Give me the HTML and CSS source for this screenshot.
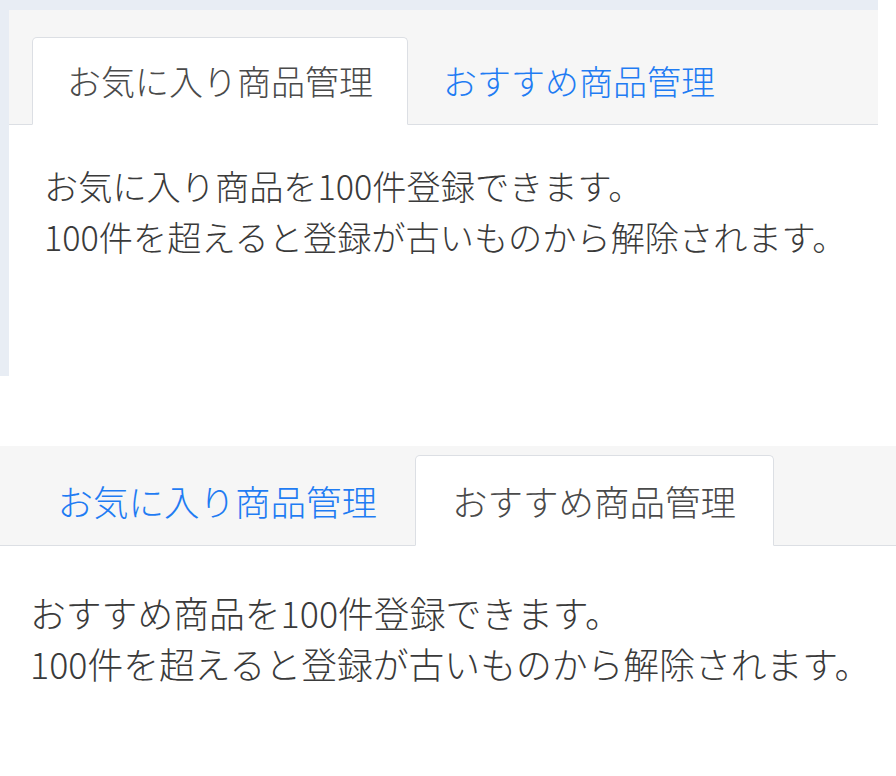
FILE: index.html
```html
<!DOCTYPE html>
<html lang="ja">
<head>
    <meta charset="UTF-8">
    <meta name="viewport" content="width=device-width, initial-scale=1.0">
    <title>商品管理タブ</title>
    <link rel="stylesheet" href="styles.css">
</head>
<body>
    <!-- お気に入りタブ選択時 -->
    <div class="shot shot-favorite">
        <div class="panel">
            <ul class="tabs">
                <li class="tab active">お気に入り商品管理</li>
                <li class="tab">おすすめ商品管理</li>
            </ul>
            <div class="tab-body">
                <p>お気に入り商品を100件登録できます。<br>100件を超えると登録が古いものから解除されます。</p>
            </div>
        </div>
    </div>

    <!-- おすすめタブ選択時 -->
    <div class="shot shot-recommend">
        <div class="panel">
            <ul class="tabs">
                <li class="tab">お気に入り商品管理</li>
                <li class="tab active">おすすめ商品管理</li>
            </ul>
            <div class="tab-body">
                <p>おすすめ商品を100件登録できます。<br>100件を超えると登録が古いものから解除されます。</p>
            </div>
        </div>
    </div>
</body>
</html>
```

FILE: styles.css
```css
body {
    margin: 0;
    background: #fff;
    font-family: "Noto Sans CJK JP", sans-serif;
    font-weight: 300;
    color: #3a3a3a;
}
.shot {
    box-sizing: border-box;
    overflow: hidden;
}
.panel {
    height: 100%;
    background: #fff;
}
.tabs {
    display: flex;
    align-items: flex-end;
    list-style: none;
    margin: 0;
    background: #f6f6f6;
    border-bottom: 1px solid #dcdfe4;
}
.tab {
    box-sizing: border-box;
    padding: 0 34px;
    margin-bottom: -1px;
    border: 1px solid transparent;
    border-radius: 5px 5px 0 0;
    color: #1f7cf3;
    white-space: nowrap;
}
.tab.active {
    background: #fff;
    color: #4a4a4a;
    border-color: #dcdfe4;
    border-bottom-color: #fff;
}
.tab-body p {
    margin: 0;
    line-height: 51px;
}

/* 上のキャプチャ */
.shot-favorite {
    width: 878px;
    height: 376px;
    padding: 10px 0 0 9px;
    background: #e8edf4;
}
.shot-favorite .panel {
    border-top-left-radius: 6px;
}
.shot-favorite .tabs {
    padding: 27px 0 0 23px;
    font-size: 34px;
}
.shot-favorite .tab {
    height: 88px;
    line-height: 86px;
}
.shot-favorite .tab-body {
    padding: 35px 0 0 35px;
    font-size: 34.2px;
}

/* 下のキャプチャ */
.shot-recommend {
    margin-top: 70px;
    width: 896px;
    height: 330px;
}
.shot-recommend .tabs {
    padding: 9px 0 0 20px;
    font-size: 35.5px;
}
.shot-recommend .tab {
    height: 91px;
    padding: 0 36.5px;
    line-height: 89px;
}
.shot-recommend .tab-body {
    padding: 41px 0 0 30px;
    font-size: 35.8px;
}
```
